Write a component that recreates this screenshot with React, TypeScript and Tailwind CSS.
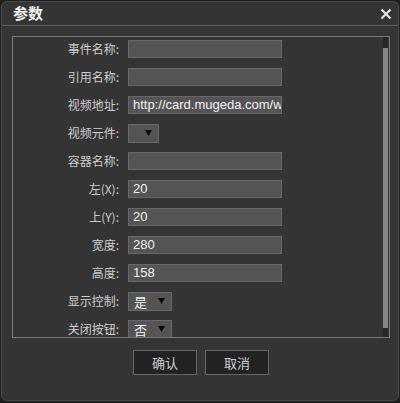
import type { ReactNode } from "react";

type Field =
  | { label: string; kind: "input"; value?: string }
  | { label: string; kind: "select"; value?: string; width: string };

const fields: Field[] = [
  { label: "事件名称:", kind: "input" },
  { label: "引用名称:", kind: "input" },
  { label: "视频地址:", kind: "input", value: "http://card.mugeda.com/w" },
  { label: "视频元件:", kind: "select", width: "w-[31px]" },
  { label: "容器名称:", kind: "input" },
  { label: "左(X):", kind: "input", value: "20" },
  { label: "上(Y):", kind: "input", value: "20" },
  { label: "宽度:", kind: "input", value: "280" },
  { label: "高度:", kind: "input", value: "158" },
  { label: "显示控制:", kind: "select", value: "是", width: "w-[44px]" },
  { label: "关闭按钮:", kind: "select", value: "否", width: "w-[44px]" },
];

const cjk = "font-['Noto_Sans_CJK_SC','Noto_Sans',sans-serif]";
const latin = "font-['Liberation_Sans','Noto_Sans_CJK_SC',sans-serif]";

function Row({ label, children }: { label: string; children: ReactNode }) {
  return (
    <div className="flex h-[18px] shrink-0 items-center">
      <span className={`mr-[9px] w-[106px] text-right text-[12px] leading-none text-[#cfcfcf] ${cjk}`}>
        {label}
      </span>
      {children}
    </div>
  );
}

function Button({ children }: { children: ReactNode }) {
  return (
    <button
      className={`flex h-[25px] w-[64px] items-center justify-center border border-[#666] bg-[#222] text-[13px] text-[#cfcfcf] ${cjk}`}
    >
      {children}
    </button>
  );
}

export default function App() {
  return (
    <div className="h-[403px] w-[400px] bg-[#1f1f1f] pl-[1px] pt-[1px]">
      <div className="flex h-[400px] w-[398px] flex-col rounded-[6px] border border-[#4a4a4a] bg-[#343434]">
        <div className="flex h-[24px] shrink-0 items-center justify-between border-b border-[#5a5a5a] pl-[11px] pr-[6px]">
          <span className={`text-[15px] font-bold text-[#f0f0f0] ${cjk}`}>参数</span>
          <svg width="12" height="12" viewBox="0 0 12 12" className="mt-[1px]">
            <path d="M1.5 1.5 L10.5 10.5 M10.5 1.5 L1.5 10.5" stroke="#e6e6e6" strokeWidth="2.2" />
          </svg>
        </div>

        <div className="ml-[10px] mt-[10px] flex h-[302px] w-[378px] border border-[#7a7a7a]">
          <div className="flex flex-1 flex-col gap-[10px] overflow-hidden pt-[3px]">
            {fields.map((f) => (
              <Row key={f.label} label={f.label}>
                {f.kind === "input" ? (
                  <div
                    className={`flex h-[18px] w-[154px] items-center overflow-hidden whitespace-nowrap border border-[#686868] bg-[#545454] pl-[4px] text-[13px] text-[#f2f2f2] ${latin}`}
                  >
                    {f.value ?? ""}
                  </div>
                ) : (
                  <div
                    className={`flex h-[19px] ${f.width} shrink-0 items-center justify-between border border-[#686868] bg-[#545454] pl-[5px] pr-[6px] text-[13px] text-[#f2f2f2] ${cjk}`}
                  >
                    <span className="leading-none">{f.value ?? ""}</span>
                    <svg width="7" height="6" viewBox="0 0 7 6">
                      <path d="M0 0 H7 L3.5 6 Z" fill="#0a0a0a" />
                    </svg>
                  </div>
                )}
              </Row>
            ))}
          </div>
          <div className="mr-[1px] flex w-[5px] flex-col bg-[#262626]">
            <div className="h-[11px]" />
            <div className="flex-1 bg-[#868686]" />
            <div className="h-[9px]" />
          </div>
        </div>

        <div className="ml-[2px] mt-[12px] flex justify-center gap-[8px]">
          <Button>确认</Button>
          <Button>取消</Button>
        </div>
      </div>
    </div>
  );
}
